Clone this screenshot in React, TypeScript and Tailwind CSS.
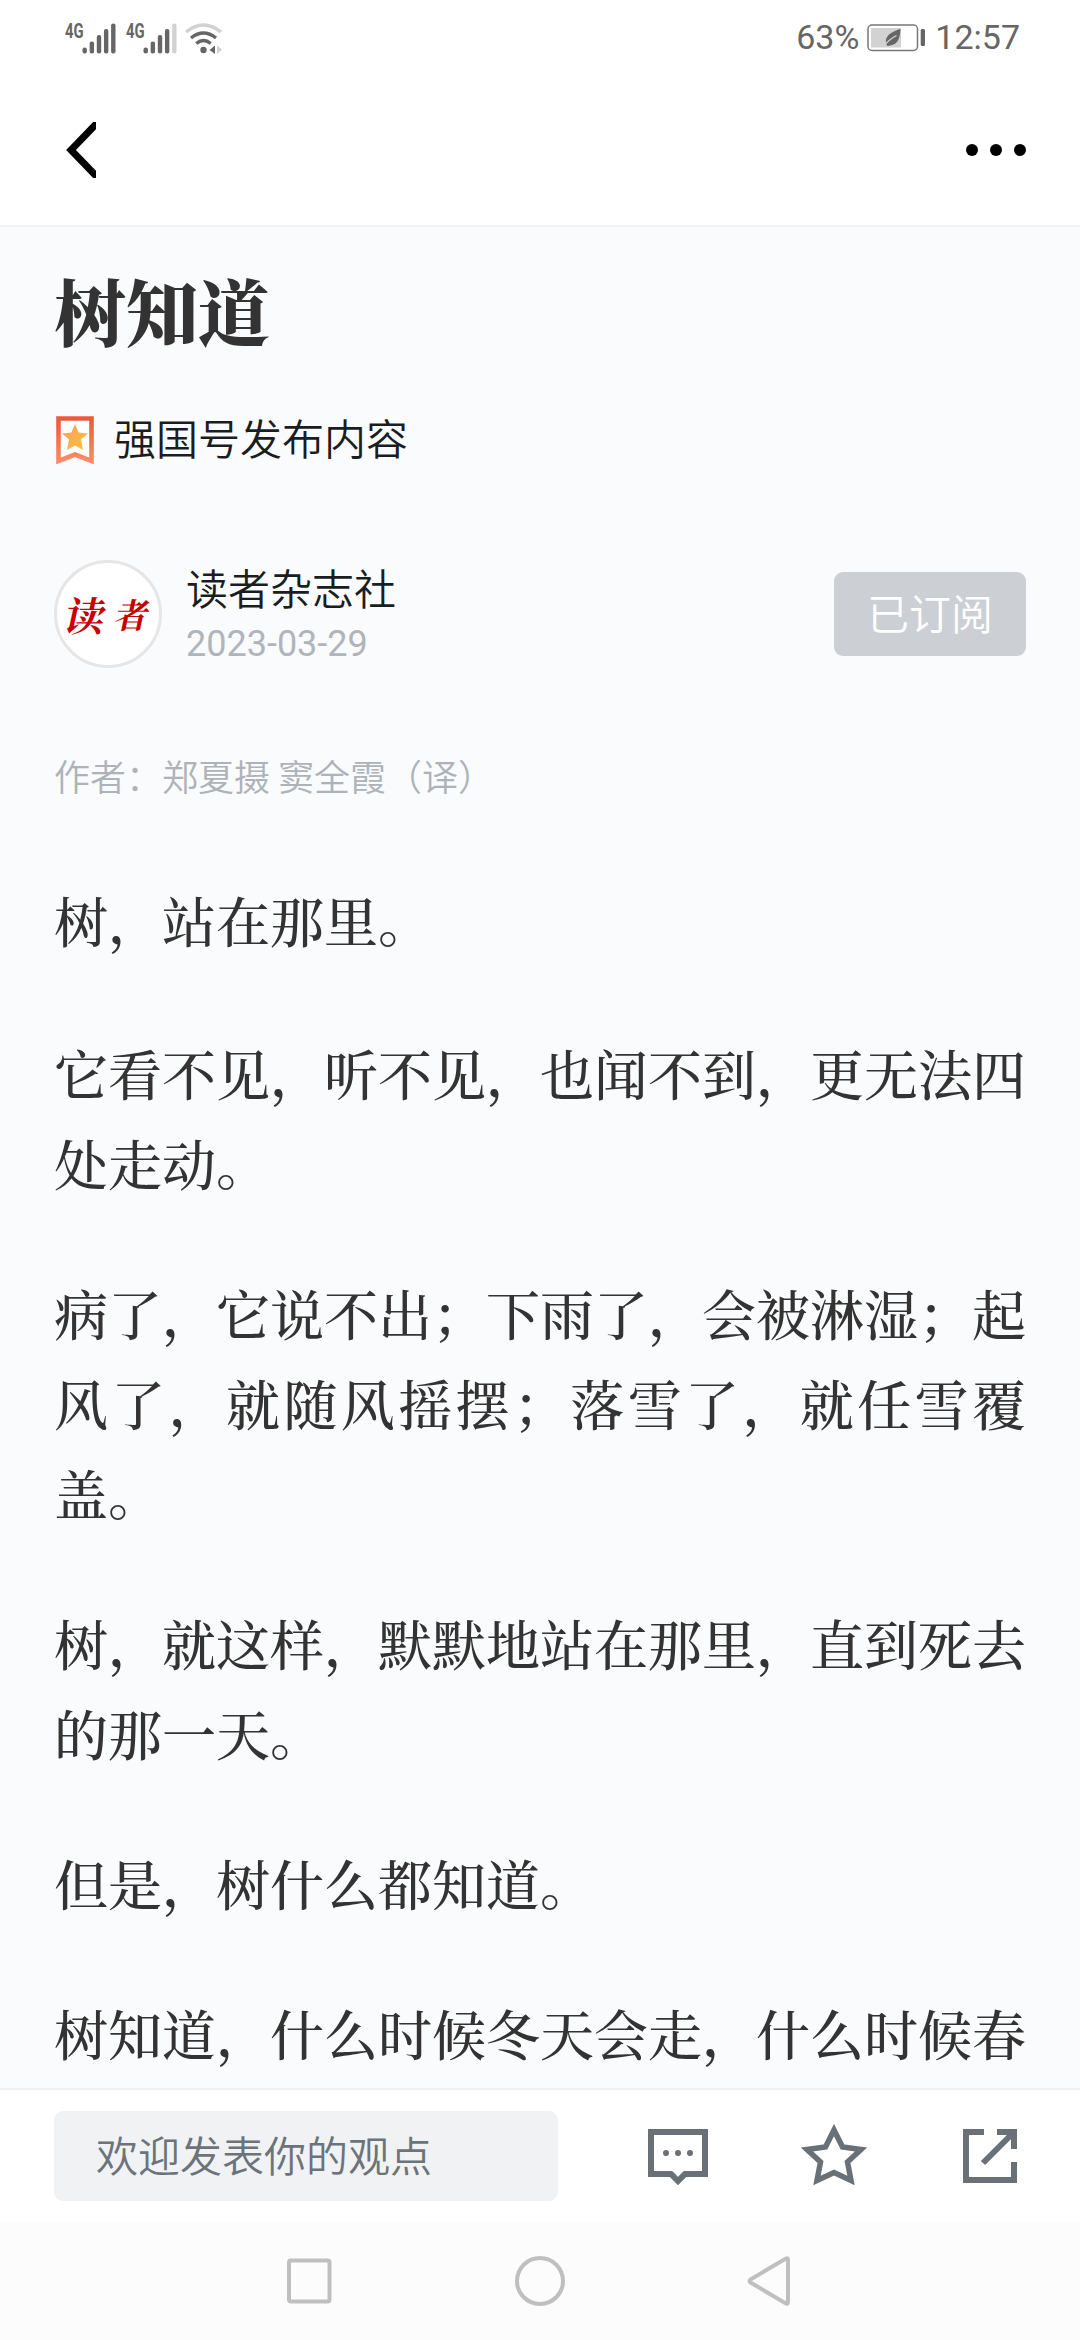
import type { ReactNode } from "react";

const paragraphs = [
  "树，站在那里。",
  "它看不见，听不见，也闻不到，更无法四处走动。",
  "病了，它说不出；下雨了，会被淋湿；起风了，就随风摇摆；落雪了，就任雪覆盖。",
  "树，就这样，默默地站在那里，直到死去的那一天。",
  "但是，树什么都知道。",
  "树知道，什么时候冬天会走，什么时候春",
];

type SignalProps = {
  level: number;
};

function Signal({ level }: SignalProps) {
  return (
    <div className="relative h-8 w-[52px]">
      <span className="absolute top-0 left-0 origin-left scale-x-[0.74] font-['Roboto'] text-[20px] leading-[18px] font-bold">
        4G
      </span>
      <svg className="h-8 w-[52px]" viewBox="0 0 52 32">
        {[6, 12, 18.5, 24.5, 30].map((height, index) => (
          <rect
            key={height}
            x={17.5 + index * 7.15}
            y={31.5 - height}
            width="4.4"
            height={height}
            rx="2"
            fill={index < level ? "#666" : "#d2d2d2"}
          />
        ))}
      </svg>
    </div>
  );
}

function Wifi() {
  return (
    <svg className="-ml-[3px] h-8 w-10" viewBox="0 0 40 32" fill="none" strokeWidth="3.4">
      <path d="M2 10Q19.5-4 37 10" stroke="#d2d2d2" />
      <path d="M7 16Q19.5 6 32 16" stroke="#666" />
      <path d="M12.3 21.5Q19.5 15.5 26.7 21.5" stroke="#666" />
      <circle cx="19.5" cy="28" r="3.2" fill="#666" />
      <path d="M25.5 28L31 23.5V32Z" fill="#666" />
      <path d="M38 27.5L33 23.5V32Z" fill="#d2d2d2" />
    </svg>
  );
}

function Battery() {
  return (
    <svg className="h-7 w-[60px]" viewBox="0 0 60 28" fill="none">
      <rect x="1" y="1" width="49.5" height="25.5" rx="4" stroke="#777" strokeWidth="1.5" />
      <rect x="4" y="4" width="30" height="19.5" fill="#d2d2d2" />
      <path d="M33.5 5C33 13 31.5 20.5 23 21.5L20.5 22C17 17 18.5 9 33.5 5Z" fill="#666" />
      <path d="M19 19.5C22 16 26 13.5 29.5 11.5" stroke="#d2d2d2" strokeWidth="1.3" />
      <rect x="53.7" y="5" width="4.3" height="17" rx="1.5" fill="#666" />
    </svg>
  );
}

function StatusBar() {
  return (
    <div className="flex h-[75px] items-center justify-between pr-[60px] pl-[65px] font-['Roboto',sans-serif] text-[34px] text-[#666]">
      <div className="flex items-center gap-[9px]">
        <Signal level={5} />
        <Signal level={4} />
        <Wifi />
      </div>
      <div className="flex items-center">
        <span className="mr-[8px]">63%</span>
        <Battery />
        <span className="ml-[8px]">12:57</span>
      </div>
    </div>
  );
}

function Verified() {
  return (
    <svg className="h-12 w-[38px]" viewBox="0 0 38 48">
      <defs>
        <linearGradient id="ribbon" x1="0" y1="0" x2="0" y2="1">
          <stop offset="0" stopColor="#ea5a3c" />
          <stop offset="1" stopColor="#ff8a66" />
        </linearGradient>
        <linearGradient id="star" x1="0" y1="0" x2="1" y2="1">
          <stop offset="0" stopColor="#ff9d62" />
          <stop offset="1" stopColor="#f9c33c" />
        </linearGradient>
      </defs>
      <path d="M2.5 2.5H35.5V45L19 38.5L2.5 45Z" fill="#fff" stroke="url(#ribbon)" strokeWidth="4.6" />
      <path
        d="M19 8L22.7 16.5L32 17.4L25 23.6L27 34L19 29.5L11 34L13 23.6L6 17.4L15.3 16.5Z"
        fill="url(#star)"
      />
    </svg>
  );
}

type IconButtonProps = {
  label: string;
  children: ReactNode;
};

function IconButton({ label, children }: IconButtonProps) {
  return (
    <button type="button" aria-label={label} className="shrink-0">
      {children}
    </button>
  );
}

export default function App() {
  return (
    <div className="flex h-[2340px] w-[1080px] flex-col overflow-hidden bg-white font-['Noto_Sans_CJK_SC',sans-serif]">
      <StatusBar />

      <header className="flex h-[152px] shrink-0 items-center justify-between border-b-2 border-[#f0f2f4] pr-[54px] pl-[66px]">
        <IconButton label="返回">
          <svg className="h-14 w-[30px]" viewBox="0 0 30 56" fill="none" stroke="#000" strokeWidth="7">
            <path d="M33-1L5 28L33 57" />
          </svg>
        </IconButton>
        <IconButton label="更多">
          <svg className="h-3 w-[60px]" viewBox="0 0 60 12">
            <circle cx="6" cy="6" r="6" />
            <circle cx="30" cy="6" r="6" />
            <circle cx="54" cy="6" r="6" />
          </svg>
        </IconButton>
      </header>

      <main className="h-[1861px] shrink-0 overflow-hidden bg-[#fafbfd] px-[54px] pt-[32px] text-[#333]">
        <h1 className="font-['Noto_Serif_CJK_SC','Noto_Sans_CJK_SC',serif] text-[72px] leading-[100px] font-black">
          树知道
        </h1>

        <div className="mt-[51px] flex h-[60px] items-center gap-[20px] pl-[2px] text-[42px] font-[350] text-[#1a1d21]">
          <Verified />
          <span className="-mt-[8px]">强国号发布内容</span>
        </div>

        <div className="mt-[90px] flex h-[108px] items-center">
          <div className="flex size-[108px] items-center justify-center rounded-full border-[3px] border-[#e6e6e6] bg-white">
            <span className="flex -skew-x-12 items-center gap-[10px] font-['Noto_Serif_CJK_SC','Noto_Sans_CJK_SC',serif] text-[40px] leading-none font-bold text-[#c70000]">
              <span>读</span>
              <span className="text-[34px]">者</span>
            </span>
          </div>
          <div className="ml-[24px] flex grow flex-col">
            <span className="text-[42px] leading-[52px] font-[350] text-[#1a1d21]">读者杂志社</span>
            <span className="mt-[6px] -mb-[2px] font-['Roboto',sans-serif] text-[36px] leading-[50px] text-[#b0b5bb]">
              2023-03-29
            </span>
          </div>
          <button
            type="button"
            className="h-[84px] w-[192px] rounded-[9px] bg-[#cccfd4] pb-[5px] text-[42px] font-[350] text-white"
          >
            已订阅
          </button>
        </div>

        <p className="mt-[82px] text-[36px] leading-[50px] font-[350] text-[#adb3b9]">作者：郑夏摄 窦全霞（译）</p>

        <div className="mt-[75px] flex flex-col gap-[60px] text-justify font-['Noto_Serif_CJK_SC','Noto_Sans_CJK_SC',serif] text-[54px] leading-[90px] font-medium">
          {paragraphs.map((text) => (
            <p key={text} className="first:mb-[3px]">
              {text}
            </p>
          ))}
        </div>
      </main>

      <footer className="flex h-[134px] shrink-0 items-center border-t-2 border-[#f0f2f4] pr-[57px] pl-[54px]">
        <div className="flex h-[90px] w-[504px] items-center rounded-[9px] bg-[#f0f2f4] pb-[5px] pl-[42px] text-[42px] font-[350] text-[#6c7379]">
          欢迎发表你的观点
        </div>
        <div className="ml-[87px] flex grow items-center justify-between text-[#697076]">
          <IconButton label="评论">
            <svg className="h-[64px] w-[66px]" viewBox="-3 0 66 64" fill="none" stroke="currentColor" strokeWidth="6">
              <path d="M3 8H57V50H37L30 57L23 50H3Z" />
              <g fill="currentColor" stroke="none">
                <circle cx="18" cy="29" r="3" />
                <circle cx="30" cy="29" r="3" />
                <circle cx="42" cy="29" r="3" />
              </g>
            </svg>
          </IconButton>
          <IconButton label="收藏">
            <svg className="h-[64px] w-[66px]" viewBox="0 0 66 64" fill="none" stroke="currentColor" strokeWidth="5.5">
              <path d="M33 6L41.5 23L60 25.5L46.5 38L50 56.5L33 48.5L16 56.5L19.5 38L6 25.5L24.5 23Z" />
            </svg>
          </IconButton>
          <IconButton label="分享">
            <svg className="h-[64px] w-[66px]" viewBox="-6 0 66 64" fill="none" stroke="currentColor" strokeWidth="6">
              <path d="M21 8H3V56H51V38" />
              <path d="M34 8H51V25M50 9L20 39" />
            </svg>
          </IconButton>
        </div>
      </footer>

      <nav className="flex grow items-center justify-between bg-[#fcfcfc] pr-[289px] pl-[287px]">
        <IconButton label="最近任务">
          <svg className="h-[50px] w-[45px]" viewBox="0 0 45 50" fill="none" stroke="#bfbfbf" strokeWidth="4">
            <rect x="2" y="4.5" width="40.5" height="41" rx="2" />
          </svg>
        </IconButton>
        <IconButton label="主屏幕">
          <svg className="size-[50px]" viewBox="0 0 50 50" fill="none" stroke="#bfbfbf" strokeWidth="4">
            <circle cx="25" cy="25" r="23" />
          </svg>
        </IconButton>
        <IconButton label="后退">
          <svg
            className="h-[50px] w-[44px]"
            viewBox="0 0 44 50"
            fill="none"
            stroke="#bfbfbf"
            strokeWidth="4"
            strokeLinejoin="round"
          >
            <path d="M39 2.5Q41 1.5 41 4V46Q41 48.5 39 47.5L3.5 26.5Q1.5 25 3.5 23.5Z" />
          </svg>
        </IconButton>
      </nav>
    </div>
  );
}
